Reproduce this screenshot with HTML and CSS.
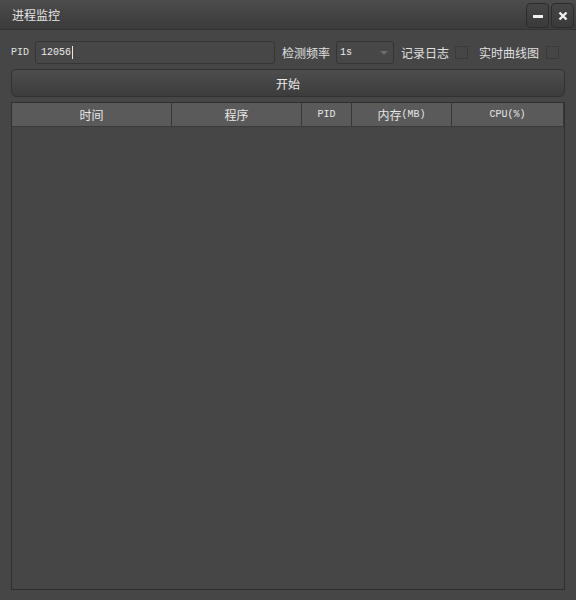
FILE: index.html
```html
<!DOCTYPE html>
<html>
<head>
<meta charset="utf-8">
<link rel="stylesheet" href="styles.css">
</head>
<body>
<div class="win">
  <div class="titlebar">
    <span class="title">进程监控</span>
    <div class="tbtns">
      <div class="tbtn"><svg width="12" height="12" viewBox="0 0 12 12"><rect x="1" y="5" width="10" height="3" fill="#f0f0f0"/></svg></div>
      <div class="tbtn"><svg width="12" height="12" viewBox="0 0 12 12"><path d="M2.5 2.5 L9.5 9.5 M9.5 2.5 L2.5 9.5" stroke="#f0f0f0" stroke-width="2.4"/></svg></div>
    </div>
  </div>
  <div class="content">
    <div class="row">
      <span class="lbl mono pidl">PID</span>
      <div class="input mono">12056<span class="caret"></span></div>
      <span class="lbl cjk">检测频率</span>
      <div class="combo mono">1s<span class="arrow"></span></div>
      <span class="lbl cjk">记录日志</span>
      <span class="chk"></span>
      <span class="lbl cjk gapl">实时曲线图</span>
      <span class="chk chk2"></span>
    </div>
    <div class="startbtn cjk">开始</div>
    <div class="table">
      <div class="thead">
        <div class="th cjk c1">时间</div>
        <div class="th cjk c2">程序</div>
        <div class="th mono c3">PID</div>
        <div class="th cjk c4">内存<span class="mono">(MB)</span></div>
        <div class="th mono c5">CPU(%)</div>
      </div>
      <div class="tbody"></div>
    </div>
  </div>
</div>
</body>
</html>
```

FILE: styles.css
```css
html, body { margin: 0; padding: 0; }
body { background: #464646; width: 576px; height: 600px; overflow: hidden; }
.cjk { font-family: "Noto Sans CJK SC", "Noto Sans", sans-serif; }
.mono { font-family: "Liberation Mono", "DejaVu Sans Mono", monospace; }
.win { width: 576px; height: 600px; display: flex; flex-direction: column; }
.titlebar {
  height: 29px; flex-shrink: 0;
  background: linear-gradient(#4c4c4c, #3b3b3b);
  border-bottom: 1px solid #333;
  display: flex; align-items: center; justify-content: space-between;
  padding-left: 12px; padding-right: 2px;
}
.title { font-family: "Noto Sans CJK SC", sans-serif; font-size: 12px; color: #e6e6e6; }
.tbtns { display: flex; gap: 2px; align-self: flex-start; padding-top: 3px; }
.tbtn {
  width: 21px; height: 23px; border: 1px solid #2c2c2c; border-radius: 4px;
  background: linear-gradient(#464646, #3a3a3a);
  display: flex; align-items: center; justify-content: center;
}
.content { padding: 11px 11px 0 11px; display: flex; flex-direction: column; }
.row { display: flex; align-items: center; height: 23px; white-space: nowrap; }
.row > * { flex-shrink: 0; }
.lbl { color: #e0e0e0; font-size: 12px; }
.lbl.pidl { font-size: 10px; width: 24px; }
.input {
  width: 233px; height: 21px; border: 1px solid #353535; border-radius: 3px;
  background: #474747; color: #ececec; font-size: 10px;
  display: flex; align-items: center; padding-left: 5px; margin-right: 7px;
}
.caret { display: inline-block; width: 1px; height: 13px; background: #e8e8e8; margin-left: 1px; }
.combo {
  width: 53px; height: 21px; border: 1px solid #353535; border-radius: 3px; margin-left: 6px; margin-right: 7px;
  color: #ececec; font-size: 10px; display: flex; align-items: center; padding-left: 3px; position: relative;
  background: #474747;
}
.arrow {
  position: absolute; right: 5px; top: 9px; width: 0; height: 0;
  border-left: 4px solid transparent; border-right: 4px solid transparent; border-top: 4px solid #6c6c6c;
}
.chk { width: 11px; height: 11px; border: 1px solid #3a3a3a; background: #464646; margin-left: 6px; }
.chk2 { margin-left: 7px; }
.gapl { margin-left: 11px; }
.startbtn {
  margin-top: 5px; height: 26px; border: 1px solid #323232; border-radius: 5px;
  background: linear-gradient(#4d4d4d, #3c3c3c);
  color: #ececec; font-size: 12px; display: flex; align-items: center; justify-content: center;
}
.table { margin-top: 5px; border: 1px solid #2f2f2f; height: 486px; display: flex; flex-direction: column; background: #464646; }
.thead { display: flex; height: 23px; background: #5a5a5a; border-bottom: 1px solid #3a3a3a; }
.th { color: #e6e6e6; font-size: 12px; display: flex; align-items: center; justify-content: center; border-right: 1px solid #383838; box-sizing: border-box; }
.th.mono, .th .mono { font-size: 10px; }
.c1 { width: 160px; }
.c2 { width: 130px; }
.c3 { width: 50px; }
.c4 { width: 100px; }
.c5 { width: 112px; }
.tbody { flex: 1; }
```
